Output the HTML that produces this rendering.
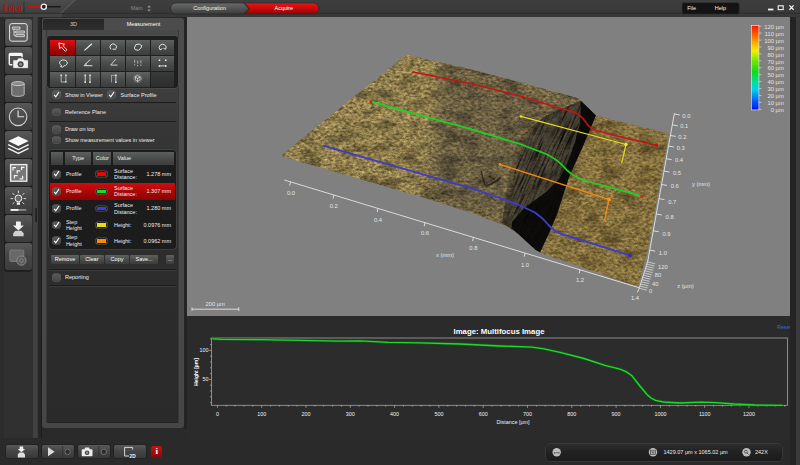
<!DOCTYPE html>
<html><head><meta charset="utf-8"><title>Leica Application Suite - Measurement</title>
<style>
*{margin:0;padding:0;box-sizing:border-box}
html,body{width:800px;height:465px;overflow:hidden;background:#2a2a2a}
body{position:relative;font-family:"Liberation Sans",sans-serif;font-size:5.5px;color:#ececec;line-height:1}
.a{position:absolute}
.t{position:absolute;white-space:nowrap;line-height:6.3px}
#topbar{left:0;top:0;width:800px;height:17px;background:linear-gradient(#3e3e3e,#3a3a3a 60%,#343434)}
#sidebar{left:0;top:17px;width:41px;height:421px;background:linear-gradient(90deg,#2c2c2c 0,#2c2c2c 3.6px,#383838 4px,#303030 4.6px,#303030 32.6px,#3c3c3c 33.2px,#424242 34px,#404040 37.4px,#262626 38px,#262626 41px)}
#sideline{left:41px;top:17px;width:1px;height:421px;background:#1d1d1d}
.sb{left:4.8px;width:27.2px;height:26.4px;border-radius:2.5px;background:linear-gradient(#585858,#454545 50%,#3c3c3c);}
#panelOuter{left:42px;top:17.6px;width:141.5px;height:410.4px;background:linear-gradient(#4c4c4c,#464646);border-radius:3px}
#panelInner{left:45.6px;top:30px;width:133.4px;height:393px;background:linear-gradient(#494949 0,#404040 50px,#363636 100px,#303030 170px,#2c2c2c 260px,#2a2a2a 100%);border-radius:0 0 2px 2px;border-left:0.7px solid #383838;border-right:0.7px solid #383838;border-bottom:0.7px solid #222}
#tab3d{left:43px;top:19px;width:61px;height:11px;background:linear-gradient(#262626,#2e2e2e);text-align:center;line-height:11px;color:#cfcfcf;border-radius:2px 0 0 0}
#tabM{left:104px;top:19px;width:79px;height:11px;text-align:center;line-height:11px;color:#fff}
#viewer{left:186.5px;top:16.6px;width:603.5px;height:299.2px;background:#808080}
#vgap{left:183.5px;top:17px;width:3.5px;height:412px;background:#242424}
#rstrip{left:790px;top:17px;width:6px;height:448px;background:#242424}
#rstrip2{left:796px;top:17px;width:4px;height:448px;background:#3a3a3a}
#chartPanel{left:187px;top:316px;width:603px;height:124px;background:#2b2b2b}
.grid{left:47.2px;top:36px;width:130.8px;height:52px;background:#1f1f1f;border-radius:3px;box-shadow:0 0 0 0.6px #555}
.cell{position:absolute;width:24.4px;height:15px;background:linear-gradient(#5f6161,#4a4c4c 50%,#3c3e3e)}
.cell.sel{background:linear-gradient(#e01010,#b00808 50%,#8a0404)}
.cell.empty{background:linear-gradient(#3a3a3a,#2e2e2e)}
.cb{position:absolute;width:7.2px;height:6.8px;border-radius:1.2px;background:linear-gradient(#5a5a5a,#454545);box-shadow:0 0 0 0.6px #6a6a6a}
.sep{position:absolute;left:49px;width:127px;height:1px;background:#1c1c1c;box-shadow:0 1px 0 #3a3a3a}
.tbl{left:48.8px;top:150px;width:127px;height:98.6px;background:#1c1c1c;border-radius:3px;box-shadow:0 0 0 0.6px #4a4a4a}
.th{position:absolute;top:151.6px;height:13.2px;background:linear-gradient(#5d5f5f,#4a4c4c 50%,#3b3d3d);line-height:13.2px}
.sw{position:absolute;left:96px;width:11.4px;height:5.8px;border-radius:1.6px;border:0.8px solid #222;box-shadow:0 0 0 0.6px #5a5a5a}
.btn{position:absolute;top:255.2px;height:8.8px;line-height:8.8px;text-align:center;background:linear-gradient(#606262,#4a4c4c 50%,#3a3c3c);border-radius:1.2px;color:#fff}
.bb{position:absolute;top:445px;height:13.4px;width:32px;border-radius:2px;background:linear-gradient(#585858,#444 50%,#383838);box-shadow:0 0 0 0.6px #1c1c1c}
</style></head><body>
<div id="topbar" class="a"></div>
<div id="sidebar" class="a"></div><div id="sideline" class="a"></div>
<div id="panelOuter" class="a"></div><div id="panelInner" class="a"></div>
<div id="tab3d" class="a">3D</div><div id="tabM" class="a">Measurement</div>
<div id="vgap" class="a"></div>
<div id="viewer" class="a"></div>
<div id="chartPanel" class="a"></div>
<div id="rstrip" class="a"></div><div id="rstrip2" class="a"></div>
<div class="a" style="left:4.4px;top:18.6px;width:28px;height:253.4px;background:#1f1f1f;border-radius:3px"></div>
<div class="a sb" style="top:19.2px"></div>
<div class="a sb" style="top:47.2px"></div>
<div class="a sb" style="top:75.2px"></div>
<div class="a sb" style="top:103.2px"></div>
<div class="a sb" style="top:131.2px"></div>
<div class="a sb" style="top:159.2px"></div>
<div class="a sb" style="top:187.2px"></div>
<div class="a sb" style="top:215.2px"></div>
<div class="a sb" style="top:243.2px"></div>
<div class="a grid"></div>
<div class="cell sel" style="left:50.1px;top:39.6px;width:25.3px"></div>
<div class="cell" style="left:76.3px;top:39.6px;width:24.0px"></div>
<div class="cell" style="left:101.2px;top:39.6px;width:24.1px"></div>
<div class="cell" style="left:126.2px;top:39.6px;width:23.7px"></div>
<div class="cell" style="left:150.8px;top:39.6px;width:23.6px"></div>
<div class="cell" style="left:50.1px;top:56px;width:25.3px"></div>
<div class="cell" style="left:76.3px;top:56px;width:24.0px"></div>
<div class="cell" style="left:101.2px;top:56px;width:24.1px"></div>
<div class="cell" style="left:126.2px;top:56px;width:23.7px"></div>
<div class="cell" style="left:150.8px;top:56px;width:23.6px"></div>
<div class="cell" style="left:50.1px;top:71.6px;width:25.3px"></div>
<div class="cell" style="left:76.3px;top:71.6px;width:24.0px"></div>
<div class="cell" style="left:101.2px;top:71.6px;width:24.1px"></div>
<div class="cell" style="left:126.2px;top:71.6px;width:23.7px"></div>
<div class="cell empty" style="left:150.8px;top:71.6px;width:23.6px"></div>
<div class="cb" style="left:52.6px;top:91.4px"></div><svg class="a" style="left:52.1px;top:89.9px" width="10" height="9" viewBox="0 0 10 9"><path d="M2.2 4.8 L3.8 6.8 L7 2" fill="none" stroke="#fff" stroke-width="1.1"/></svg>
<div class="t" style="left:65px;top:91.65px;">Show in Viewer</div>
<div class="cb" style="left:107.9px;top:91.4px"></div><svg class="a" style="left:107.4px;top:89.9px" width="10" height="9" viewBox="0 0 10 9"><path d="M2.2 4.8 L3.8 6.8 L7 2" fill="none" stroke="#fff" stroke-width="1.1"/></svg>
<div class="t" style="left:120.5px;top:91.65px;">Surface Profile</div>
<div class="sep" style="top:102px"></div>
<div class="cb" style="left:52.6px;top:108.7px"></div>
<div class="t" style="left:65px;top:109.05px;">Reference Plane</div>
<div class="sep" style="top:120.6px"></div>
<div class="cb" style="left:52.6px;top:125.8px"></div>
<div class="t" style="left:65px;top:126.15px;">Draw on top</div>
<div class="cb" style="left:52.6px;top:136.6px"></div>
<div class="t" style="left:65px;top:136.95px;">Show measurement values in viewer</div>
<div class="a tbl"></div>
<div class="th" style="left:50.6px;width:12.8px;text-align:center;"></div>
<div class="th" style="left:65px;width:26.4px;text-align:center;">Type</div>
<div class="th" style="left:93.3px;width:18.2px;text-align:center;">Color</div>
<div class="th" style="left:113.1px;width:60.6px;text-align:left;padding-left:4.4px;">Value</div>
<div class="cb" style="left:52.7px;top:170.79999999999998px"></div><svg class="a" style="left:52.2px;top:169.29999999999998px" width="10" height="9" viewBox="0 0 10 9"><path d="M2.2 4.8 L3.8 6.8 L7 2" fill="none" stroke="#fff" stroke-width="1.1"/></svg>
<div class="t" style="left:65.9px;top:171.05px;">Profile</div>
<div class="sw" style="top:171.30px;background:#f20000"></div>
<div class="t" style="left:114px;top:167.95px;">Surface</div>
<div class="t" style="left:114px;top:174.25px;">Distance:</div>
<div class="t" style="right:629px;top:171.05px">1.278 mm</div>
<div class="a" style="left:50.1px;top:182.8px;width:124.8px;height:17.2px;background:linear-gradient(#d00c0c,#a80606 55%,#8c0303)"></div>
<div class="cb" style="left:52.7px;top:188.0px"></div><svg class="a" style="left:52.2px;top:186.5px" width="10" height="9" viewBox="0 0 10 9"><path d="M2.2 4.8 L3.8 6.8 L7 2" fill="none" stroke="#fff" stroke-width="1.1"/></svg>
<div class="t" style="left:65.9px;top:188.25px;">Profile</div>
<div class="sw" style="top:188.50px;background:#10e020"></div>
<div class="t" style="left:114px;top:185.15px;">Surface</div>
<div class="t" style="left:114px;top:191.45px;">Distance:</div>
<div class="t" style="right:629px;top:188.25px">1.307 mm</div>
<div class="cb" style="left:52.7px;top:205.1px"></div><svg class="a" style="left:52.2px;top:203.6px" width="10" height="9" viewBox="0 0 10 9"><path d="M2.2 4.8 L3.8 6.8 L7 2" fill="none" stroke="#fff" stroke-width="1.1"/></svg>
<div class="t" style="left:65.9px;top:205.35px;">Profile</div>
<div class="sw" style="top:205.60px;background:#3a3ae8"></div>
<div class="t" style="left:114px;top:202.25px;">Surface</div>
<div class="t" style="left:114px;top:208.55px;">Distance:</div>
<div class="t" style="right:629px;top:205.35px">1.280 mm</div>
<div class="cb" style="left:52.7px;top:221.6px"></div><svg class="a" style="left:52.2px;top:220.1px" width="10" height="9" viewBox="0 0 10 9"><path d="M2.2 4.8 L3.8 6.8 L7 2" fill="none" stroke="#fff" stroke-width="1.1"/></svg>
<div class="t" style="left:65.9px;top:218.75px;">Step</div>
<div class="t" style="left:65.9px;top:225.05px;">Height</div>
<div class="sw" style="top:222.10px;background:#e6e010"></div>
<div class="t" style="left:114px;top:221.85px;">Height:</div>
<div class="t" style="right:629px;top:221.85px">0.0976 mm</div>
<div class="cb" style="left:52.7px;top:237.29999999999998px"></div><svg class="a" style="left:52.2px;top:235.79999999999998px" width="10" height="9" viewBox="0 0 10 9"><path d="M2.2 4.8 L3.8 6.8 L7 2" fill="none" stroke="#fff" stroke-width="1.1"/></svg>
<div class="t" style="left:65.9px;top:234.45px;">Step</div>
<div class="t" style="left:65.9px;top:240.75px;">Height</div>
<div class="sw" style="top:237.80px;background:#ff8a00"></div>
<div class="t" style="left:114px;top:237.55px;">Height:</div>
<div class="t" style="right:629px;top:237.55px">0.0962 mm</div>
<div class="btn" style="left:51px;width:28px">Remove</div>
<div class="btn" style="left:79.9px;width:24.1px">Clear</div>
<div class="btn" style="left:104.9px;width:24.3px">Copy</div>
<div class="btn" style="left:130.1px;width:28px">Save...</div>
<div class="btn" style="left:166px;width:8px">...</div>
<div class="sep" style="top:269px"></div>
<div class="cb" style="left:52.6px;top:273.8px"></div>
<div class="t" style="left:65px;top:274.15px;">Reporting</div>
<div class="sep" style="top:285px"></div>
<div class="bb" style="left:5.5px"></div>
<div class="bb" style="left:41.5px"></div>
<div class="bb" style="left:77.5px"></div>
<div class="bb" style="left:113.8px"></div>
<div class="a" style="left:151.2px;top:446px;width:11px;height:11.6px;border-radius:2.5px;background:linear-gradient(#c41414,#8a0606);color:#fff;font-weight:bold;font-size:9px;line-height:11.5px;text-align:center;font-family:'Liberation Serif',serif">i</div>
<div class="a" style="left:546px;top:443.7px;width:236px;height:17.3px;border-radius:4px;background:linear-gradient(#2d2d2d,#222 45%,#1b1b1b);box-shadow:0 0 0 0.7px #3e3e3e"></div>
<div class="t" style="left:663.5px;top:449.25px;">1429.07 µm x 1065.02 µm</div>
<div class="t" style="left:755px;top:449.25px;">242X</div>
<svg class="a" style="left:187px;top:17px" width="603" height="299" viewBox="187 17 603 299" font-family="Liberation Sans, sans-serif">
<defs>
<filter id="tex" x="0" y="0" width="100%" height="100%" color-interpolation-filters="sRGB">
<feTurbulence type="fractalNoise" baseFrequency="0.28 0.42" numOctaves="4" seed="7"/>
<feColorMatrix type="matrix" values="0.8 0 0 0 0.15  0.71 0 0 0 0.125  0.42 0 0 0 0.085  0 0 0 0 1"/>
</filter>
<filter id="tex2" x="0" y="0" width="100%" height="100%" color-interpolation-filters="sRGB">
<feTurbulence type="fractalNoise" baseFrequency="0.05 0.09" numOctaves="3" seed="11"/>
<feColorMatrix type="matrix" values="0 0 0 0 0  0 0 0 0 0  0 0 0 0 0  -2.4 0 0 0 1.35"/>
</filter>
<filter id="blur6" x="-20%" y="-20%" width="140%" height="140%"><feGaussianBlur stdDeviation="7"/></filter>
<filter id="blur3" x="-20%" y="-20%" width="140%" height="140%"><feGaussianBlur stdDeviation="2.5"/></filter>
<filter id="streak" x="0" y="0" width="100%" height="100%" color-interpolation-filters="sRGB">
<feTurbulence type="fractalNoise" baseFrequency="0.55 0.035" numOctaves="3" seed="3"/>
<feColorMatrix type="matrix" values="2.4 0 0 0 -0.32  2.4 0 0 0 -0.32  2.4 0 0 0 -0.32  0 0 0 0 1"/>
</filter>
<clipPath id="facec"><path d="M580.6 100.5 L596 115 L583 146 L569 177 L550 231 L540 252.5 L535.5 250 L518 234 L506 226 L511 196 L516 165 L524 138 L548 115 Z"/></clipPath>
<clipPath id="surf"><path d="M280.5 156 L406.5 54.5 L470 69 L540 87.5 L579 98.5 L596 115.5 L669 133.6 L648 249 L638 286.8 L541 253 L535.5 250 L518 234 L507.5 226.4 L472.5 213.2 L420 196.6 Z"/></clipPath>
<linearGradient id="cliff" gradientUnits="userSpaceOnUse" x1="510" y1="150" x2="572" y2="172">
<stop offset="0" stop-color="#ffffff"/>
<stop offset="0.28" stop-color="#8c8986"/>
<stop offset="0.7" stop-color="#72706e"/>
<stop offset="1" stop-color="#4c4a48"/>
</linearGradient>
<linearGradient id="rain" x1="0" y1="0" x2="0" y2="1">
<stop offset="0" stop-color="#ff1800"/><stop offset="0.1" stop-color="#ff5a00"/><stop offset="0.2" stop-color="#ffa800"/><stop offset="0.3" stop-color="#f4f000"/><stop offset="0.42" stop-color="#70e800"/><stop offset="0.55" stop-color="#10d820"/><stop offset="0.66" stop-color="#00e090"/><stop offset="0.76" stop-color="#00d0f0"/><stop offset="0.86" stop-color="#0078f8"/><stop offset="1" stop-color="#0010f0"/>
</linearGradient>
</defs>
<g clip-path="url(#surf)">
<rect x="270" y="45" width="410" height="250" filter="url(#tex)"/>
<rect x="270" y="45" width="410" height="250" fill="#3a2e1c" filter="url(#tex2)" opacity="0.5"/>
<path d="M596 115.5 L669 133.6 L648 249 L638 286.8 L541 253 L569 177 Z" fill="#c09838" opacity="0.18"/>
<path d="M280 156 L406 54 L450 64 L420 200 Z" fill="#e0c878" opacity="0.13" filter="url(#blur6)"/>
<path d="M440 60 L585 98.5 L530 138 L516 196 L512 228 L425 200 Z" fill="#46423a" opacity="0.4" filter="url(#blur6)"/>
<path d="M596 115.5 L669 133.6 L648 249 L638 286.8 L541 253 L569 177 Z" fill="#4a3c20" opacity="0.16"/>
<path d="M580.6 100.5 L596 115 L583 146 L569 177 L550 231 L540 252.5 L535.5 250 L518 234 L502 223 L506 196 L511 165 L518 138 L545 116 Z" fill="url(#cliff)" style="mix-blend-mode:multiply"/>
<path d="M580.6 100.5 L596 115 L583 146 L569 177 L550 231 L540 252.5 L535.5 250 L518 234 L508 226 L512 196 L517 165 L526 138 L550 114 Z" fill="#5a564e" opacity="0.45" filter="url(#blur3)"/>
<g clip-path="url(#facec)" style="mix-blend-mode:multiply"><g transform="rotate(24 545 170)"><rect x="440" y="60" width="220" height="240" filter="url(#streak)"/></g></g>
<path d="M581 101 L596 115 L583 146 L569 177 L563 196 L557 215 L548 235 L540 252.5 L535.5 250 L518 234 L512 228 L512 222 L524 208 L546 192 L560 178 L568 162 L575 143 L577 133 L580 124 Z" fill="#080706" opacity="0.9"/>
<path d="M481.4 171 q1 8 3.8 14.4 M485.4 186.4 q9 -3 15.2 -9 M489 176 q3 3 6 3" stroke="#1d170f" stroke-width="1.5" fill="none" opacity="0.75"/>
</g>
<g stroke="#e4e4e4" stroke-width="0.9" fill="none">
<path d="M284.4 180 L639.4 287.8 L637.4 292.4"/>
<path d="M290.5 181.9 l-0.8 3.6"/>
<path d="M333.8 195.0 l-0.8 3.6"/>
<path d="M378 208.4 l-0.8 3.6"/>
<path d="M425 222.7 l-0.8 3.6"/>
<path d="M473.4 237.4 l-0.8 3.6"/>
<path d="M525 253.1 l-0.8 3.6"/>
<path d="M580 269.8 l-0.8 3.6"/>
<path d="M674.4 113.3 L647.8 261 L639.4 287.8"/>
<path d="M674.3 114 l5.4 0.9"/>
<path d="M672.3 124.9 l5.4 0.9"/>
<path d="M670.4 135.5 l5.4 0.9"/>
<path d="M668.5 146.1 l5.4 0.9"/>
<path d="M666.2 158.7 l5.4 0.9"/>
<path d="M664.0 171.1 l5.4 0.9"/>
<path d="M661.6 184.5 l5.4 0.9"/>
<path d="M659.0 198.7 l5.4 0.9"/>
<path d="M656.3 214 l5.4 0.9"/>
<path d="M653.2 230.8 l5.4 0.9"/>
<path d="M649.8 250.2 l5.4 0.9"/>
<path d="M647.6 262.0 l7.6 1.8" stroke-width="0.7"/>
<path d="M646.9 264.2 l7.6 1.8" stroke-width="0.7"/>
<path d="M646.2 266.4 l7.6 1.8" stroke-width="0.7"/>
<path d="M645.6 268.6 l7.6 1.8" stroke-width="0.7"/>
<path d="M644.9 270.8 l7.6 1.8" stroke-width="0.7"/>
<path d="M644.2 273.0 l7.6 1.8" stroke-width="0.7"/>
<path d="M643.5 275.2 l7.6 1.8" stroke-width="0.7"/>
<path d="M642.8 277.4 l7.6 1.8" stroke-width="0.7"/>
<path d="M642.1 279.6 l7.6 1.8" stroke-width="0.7"/>
<path d="M641.5 281.8 l7.6 1.8" stroke-width="0.7"/>
<path d="M640.8 284.0 l7.6 1.8" stroke-width="0.7"/>
<path d="M640.1 286.2 l7.6 1.8" stroke-width="0.7"/>
<path d="M639.4 288.4 l7.6 1.8" stroke-width="0.7"/>
</g>
<g fill="#e4e4e4" font-size="5.8" text-anchor="middle">
<text x="291" y="194.5">0.0</text>
<text x="333.8" y="207.6">0.2</text>
<text x="378" y="221.5">0.4</text>
<text x="425" y="235">0.6</text>
<text x="473.4" y="249.6">0.8</text>
<text x="525" y="266.5">1.0</text>
<text x="580" y="282">1.2</text>
<text x="635" y="299.7">1.4</text>
<text x="445" y="256.7">x (mm)</text>
<text x="686.4" y="117.8">0.0</text>
<text x="684.2" y="128.4">0.1</text>
<text x="682.4" y="139">0.2</text>
<text x="680.8" y="149.9">0.3</text>
<text x="679" y="162.3">0.4</text>
<text x="677" y="174.7">0.5</text>
<text x="674.7" y="188.3">0.6</text>
<text x="672.2" y="203.6">0.7</text>
<text x="669.6" y="219.3">0.8</text>
<text x="666.5" y="236.4">0.9</text>
<text x="662.9" y="255.4">1.0</text>
<text x="701" y="186">y (mm)</text>
<text x="662.8" y="268.6">120</text><text x="658" y="276.9">80</text><text x="655.3" y="285.5">40</text><text x="650.7" y="292.7">0</text>
<text x="685.4" y="288.3">z (µm)</text>
<text x="215.2" y="306">200 µm</text>
</g>
<path d="M192 309.2 H238.8 M192 307.4 v3.6 M238.8 307.4 v3.6" stroke="#e4e4e4" stroke-width="0.9" fill="none"/>
<g fill="none" stroke-linecap="round" stroke-linejoin="round">
<path d="M413 72 L470 83.6 L522.5 96.7 L556.6 107.2 L572 111.5 Q580 114 585.5 121.7 Q589 128 596 130.5 L617 136 L656.4 145.3" stroke="#c41414" stroke-width="1.5"/>
<path d="M371 101.7 L470 128.8 L520 144 L545 153.5 Q556 158.5 563 166 Q570 174.5 580 178.5 L588 181.5 L642 196.2" stroke="#1ed026" stroke-width="1.8"/>
<path d="M323.8 145.8 L470 187.8 L517 204 L535 212.5 Q543 218 549 225.5 Q555 232 563 234.5 L630 255.3" stroke="#3c3cc4" stroke-width="1.9"/>
<path d="M521 116.4 L626 144.5 L621.7 163" stroke="#e4dc24" stroke-width="1.2"/>
<path d="M500 164.5 L609 199.4 L604.7 220" stroke="#f08818" stroke-width="1.4"/>
</g>
<circle cx="656.4" cy="145.3" r="1.7" fill="#c01010"/><circle cx="370.8" cy="101.4" r="1.5" fill="#e02010"/><circle cx="642" cy="196.2" r="1.8" fill="#d02818"/><circle cx="630" cy="255.3" r="2" fill="#3030b8"/>
<circle cx="626" cy="144.5" r="1.7" fill="#f0e830"/><circle cx="521" cy="116.4" r="1.2" fill="#e8e020"/><circle cx="609" cy="199.4" r="1.9" fill="#f89020"/><circle cx="500" cy="164.5" r="1.4" fill="#f08818"/>
<rect x="751.3" y="25.6" width="7.6" height="84.3" fill="url(#rain)" stroke="#f0f0f0" stroke-width="0.6"/>
<g fill="#e4e4e4" font-size="5.8">
<text x="783.8" y="29.1" text-anchor="end">120 µm</text>
<text x="783.8" y="36.0" text-anchor="end">110 µm</text>
<text x="783.8" y="42.9" text-anchor="end">100 µm</text>
<text x="783.8" y="49.8" text-anchor="end">90 µm</text>
<text x="783.8" y="56.7" text-anchor="end">80 µm</text>
<text x="783.8" y="63.5" text-anchor="end">70 µm</text>
<text x="783.8" y="70.4" text-anchor="end">60 µm</text>
<text x="783.8" y="77.3" text-anchor="end">50 µm</text>
<text x="783.8" y="84.2" text-anchor="end">40 µm</text>
<text x="783.8" y="91.1" text-anchor="end">30 µm</text>
<text x="783.8" y="98.0" text-anchor="end">20 µm</text>
<text x="783.8" y="104.9" text-anchor="end">10 µm</text>
<text x="783.8" y="111.8" text-anchor="end">0 µm</text>
</g>
<g stroke="#e4e4e4" stroke-width="0.6">
<path d="M758.9 26.2 h2.6"/>
<path d="M758.9 33.1 h2.6"/>
<path d="M758.9 40.1 h2.6"/>
<path d="M758.9 47.0 h2.6"/>
<path d="M758.9 53.9 h2.6"/>
<path d="M758.9 60.8 h2.6"/>
<path d="M758.9 67.8 h2.6"/>
<path d="M758.9 74.7 h2.6"/>
<path d="M758.9 81.6 h2.6"/>
<path d="M758.9 88.6 h2.6"/>
<path d="M758.9 95.5 h2.6"/>
<path d="M758.9 102.4 h2.6"/>
<path d="M758.9 109.4 h2.6"/>
</g>
</svg>
<svg class="a" style="left:187px;top:316px" width="603" height="124" viewBox="187 316 603 124" font-family="Liberation Sans, sans-serif">
<text x="499" y="334.2" text-anchor="middle" font-size="8.1" font-weight="bold" fill="#fff" textLength="91" lengthAdjust="spacingAndGlyphs">Image: Multifocus Image</text>
<text x="784" y="328.5" text-anchor="middle" font-size="5.2" fill="#2f6fd0">Reset</text>
<rect x="211.4" y="338" width="576" height="67.3" fill="#2c2c2c" stroke="#a4a4a4" stroke-width="0.8"/>
<path d="M217.4 405.3 v2.6 M226.3 405.3 v1.4 M235.1 405.3 v1.4 M244.0 405.3 v1.4 M252.8 405.3 v1.4 M261.7 405.3 v2.6 M270.6 405.3 v1.4 M279.4 405.3 v1.4 M288.3 405.3 v1.4 M297.1 405.3 v1.4 M306.0 405.3 v2.6 M314.9 405.3 v1.4 M323.7 405.3 v1.4 M332.6 405.3 v1.4 M341.4 405.3 v1.4 M350.3 405.3 v2.6 M359.2 405.3 v1.4 M368.0 405.3 v1.4 M376.9 405.3 v1.4 M385.7 405.3 v1.4 M394.6 405.3 v2.6 M403.5 405.3 v1.4 M412.3 405.3 v1.4 M421.2 405.3 v1.4 M430.0 405.3 v1.4 M438.9 405.3 v2.6 M447.8 405.3 v1.4 M456.6 405.3 v1.4 M465.5 405.3 v1.4 M474.3 405.3 v1.4 M483.2 405.3 v2.6 M492.1 405.3 v1.4 M500.9 405.3 v1.4 M509.8 405.3 v1.4 M518.6 405.3 v1.4 M527.5 405.3 v2.6 M536.4 405.3 v1.4 M545.2 405.3 v1.4 M554.1 405.3 v1.4 M562.9 405.3 v1.4 M571.8 405.3 v2.6 M580.7 405.3 v1.4 M589.5 405.3 v1.4 M598.4 405.3 v1.4 M607.2 405.3 v1.4 M616.1 405.3 v2.6 M625.0 405.3 v1.4 M633.8 405.3 v1.4 M642.7 405.3 v1.4 M651.5 405.3 v1.4 M660.4 405.3 v2.6 M669.3 405.3 v1.4 M678.1 405.3 v1.4 M687.0 405.3 v1.4 M695.8 405.3 v1.4 M704.7 405.3 v2.6 M713.6 405.3 v1.4 M722.4 405.3 v1.4 M731.3 405.3 v1.4 M740.1 405.3 v1.4 M749.0 405.3 v2.6 M757.9 405.3 v1.4 M766.7 405.3 v1.4 M775.6 405.3 v1.4 M784.4 405.3 v1.4 M211.4 402.6 h-1.4 M211.4 396.8 h-1.4 M211.4 391.0 h-1.4 M211.4 385.2 h-1.4 M211.4 379.4 h-2.6 M211.4 373.6 h-1.4 M211.4 367.8 h-1.4 M211.4 362.0 h-1.4 M211.4 356.2 h-1.4 M211.4 350.4 h-2.6 M211.4 344.6 h-1.4 M211.4 338.8 h-1.4" stroke="#c8c8c8" stroke-width="0.6" fill="none"/>
<g fill="#f0f0f0" font-size="5.4" text-anchor="middle">
<text x="217.4" y="416.4">0</text>
<text x="261.7" y="416.4">100</text>
<text x="306.0" y="416.4">200</text>
<text x="350.3" y="416.4">300</text>
<text x="394.6" y="416.4">400</text>
<text x="438.9" y="416.4">500</text>
<text x="483.2" y="416.4">600</text>
<text x="527.5" y="416.4">700</text>
<text x="571.8" y="416.4">800</text>
<text x="616.1" y="416.4">900</text>
<text x="660.4" y="416.4">1000</text>
<text x="704.7" y="416.4">1100</text>
<text x="749.0" y="416.4">1200</text>
<text x="513" y="423.6">Distance [µm]</text>
<text x="208.6" y="352.3" text-anchor="end">100</text><text x="208.6" y="381.4" text-anchor="end">50</text>
<text transform="translate(197.6 372) rotate(-90)" font-weight="bold" font-size="5" fill="#fff">Height [µm]</text>
</g>
<path d="M213.0 338.9 L222.0 339.3 L260.0 339.7 L300.0 340.4 L340.0 341.2 L360.0 340.9 L388.0 342.4 L420.0 342.8 L460.0 344.0 L500.0 346.0 L532.0 347.2 L544.0 348.8 L560.0 352.3 L584.0 358.5 L605.0 365.4 L620.0 369.2 L626.0 371.6 L632.0 375.8 L639.5 385.5 L647.0 394.5 L651.0 398.0 L655.5 400.3 L663.5 402.0 L680.0 403.0 L701.0 402.1 L716.0 402.6 L734.0 404.0 L755.0 405.0 L782.0 405.3" fill="none" stroke="#0a6a14" stroke-width="2.8" stroke-linejoin="round" stroke-linecap="round" opacity="0.6"/>
<path d="M213.0 338.9 L222.0 339.3 L260.0 339.7 L300.0 340.4 L340.0 341.2 L360.0 340.9 L388.0 342.4 L420.0 342.8 L460.0 344.0 L500.0 346.0 L532.0 347.2 L544.0 348.8 L560.0 352.3 L584.0 358.5 L605.0 365.4 L620.0 369.2 L626.0 371.6 L632.0 375.8 L639.5 385.5 L647.0 394.5 L651.0 398.0 L655.5 400.3 L663.5 402.0 L680.0 403.0 L701.0 402.1 L716.0 402.6 L734.0 404.0 L755.0 405.0 L782.0 405.3" fill="none" stroke="#22d82c" stroke-width="1.35" stroke-linejoin="round" stroke-linecap="round"/>
</svg>
<svg class="a" style="left:0;top:0" width="800" height="18" viewBox="0 0 800 18" font-family="Liberation Sans, sans-serif">
<defs>
<linearGradient id="tl" x1="0" y1="0" x2="0" y2="1"><stop offset="0" stop-color="#4c4c4c"/><stop offset="1" stop-color="#3e3e3e"/></linearGradient>
<linearGradient id="pill" x1="0" y1="0" x2="0" y2="1"><stop offset="0" stop-color="#6a6c6c"/><stop offset="0.5" stop-color="#525454"/><stop offset="1" stop-color="#3c3e3e"/></linearGradient>
<linearGradient id="pillr" x1="0" y1="0" x2="0" y2="1"><stop offset="0" stop-color="#ee1414"/><stop offset="0.5" stop-color="#c40a0a"/><stop offset="1" stop-color="#960404"/></linearGradient>
</defs>
<path d="M0 0 H76 L62 13 H0 Z" fill="url(#tl)"/>
<path d="M76 0 L62 13 L60 13 L74 0 Z" fill="#5a5a5a" opacity="0.8"/>
<path d="M0 13.4 H800" stroke="#2a2a2a" stroke-width="0.8"/>
<rect x="0" y="13.8" width="800" height="3.2" fill="#383838"/><rect x="0" y="13.8" width="62" height="3.2" fill="#444"/>
<path d="M24 1 V12" stroke="#2c2c2c" stroke-width="0.8"/>
<text x="3" y="10.6" font-family="Liberation Serif, serif" font-style="italic" font-weight="bold" font-size="9.4" fill="#b41212" textLength="19" lengthAdjust="spacingAndGlyphs">Leica</text>
<path d="M46 6.8 H60" stroke="#1a1a1a" stroke-width="1.6" stroke-linecap="round"/>
<path d="M27.7 6.8 H41" stroke="#c81010" stroke-width="1.8" stroke-linecap="round"/>
<circle cx="43.8" cy="6.8" r="2.6" fill="#222" stroke="#f2f2f2" stroke-width="1.3"/>
<text x="136.6" y="10.4" text-anchor="middle" font-size="5.5" fill="#8a8a8a">Main</text>
<path d="M147.4 7.4 l1.7 -2.2 l1.7 2.2 Z M147.4 9.4 l1.7 2.2 l1.7 -2.2 Z" fill="#9a9a9a"/>
<path d="M176 3 H243.5 L248.5 8.5 L243.5 14 H176 A5.5 5.5 0 0 1 176 3 Z" fill="url(#pill)" stroke="#222" stroke-width="0.6"/>
<path d="M244.6 3 H313.3 A5.5 5.5 0 0 1 313.3 14 H244.6 L249.6 8.5 Z" fill="url(#pillr)" stroke="#222" stroke-width="0.5"/>
<text x="209.6" y="10.4" text-anchor="middle" font-size="5.5" fill="#f4f4f4">Configuration</text>
<text x="283.8" y="10.4" text-anchor="middle" font-size="5.5" fill="#fff">Acquire</text>
<rect x="682" y="2.6" width="57.4" height="11.6" rx="1.5" fill="#141414" stroke="#3c3c3c" stroke-width="0.5"/>
<text x="691.6" y="10.4" text-anchor="middle" font-size="5.5" fill="#f4f4f4">File</text>
<text x="720.5" y="10.4" text-anchor="middle" font-size="5.5" fill="#f4f4f4">Help</text>
<path d="M768 8.6 h5.4 v1.8 h-5.4 Z" fill="#f2f2f2"/>
<rect x="778.2" y="5.8" width="5" height="3.8" fill="none" stroke="#f2f2f2" stroke-width="1.1"/>
<path d="M789.4 5.4 l4.2 4.4 M793.6 5.4 l-4.2 4.4" stroke="#f2f2f2" stroke-width="1.3"/>
</svg>
<svg class="a" style="left:0;top:17px" width="42" height="260" viewBox="0 17 42 260" fill="none" font-family="Liberation Sans, sans-serif">
<rect x="35.4" y="208" width="1.4" height="14" fill="#1c1c1c"/>
<rect x="5.4" y="19.2" width="26.4" height="26.4" rx="2.5" fill="#5c5c5c" opacity="0.55"/>
<rect x="9.6" y="23.6" width="17.6" height="17.6" rx="2.2" stroke="#e6e6e6" stroke-width="1" fill="#6a6a6a" fill-opacity="0.5"/>
<path d="M12.6 27 h7.4 v2.2 h-7.4 Z M15.8 31 h8.6 v2 h-8.6 Z M15.8 34.6 h8.6 v2 h-8.6 Z" stroke="#e6e6e6" stroke-width="0.8" fill="#777"/>
<path d="M14 29.2 V35.6 H15.8 M14 32 H15.8" stroke="#e6e6e6" stroke-width="0.8"/>
<rect x="8.6" y="52.8" width="14.2" height="12.6" rx="1.6" fill="#f4f4f4"/>
<rect x="10" y="56" width="11.4" height="8" fill="#505050"/>
<path d="M13.8 59.8 h3.2 l1.4 -2 h4.6 l1.4 2 h3 a1 1 0 0 1 1 1 v6.6 a1 1 0 0 1 -1 1 h-13.6 a1 1 0 0 1 -1 -1 v-6.6 a1 1 0 0 1 1 -1 Z" fill="#efefef" stroke="#3c3c3c" stroke-width="0.8"/>
<circle cx="20.6" cy="64.2" r="3" fill="#444"/><circle cx="20.6" cy="64.2" r="1.5" fill="#8e8e8e"/>
<path d="M11.8 83.6 v10.8 a6.2 2 0 0 0 12.4 0 v-10.8" fill="#6e6e6e" stroke="#c4c4c4" stroke-width="0.9"/>
<ellipse cx="18" cy="83.6" rx="6.2" ry="2" fill="#888" stroke="#d0d0d0" stroke-width="0.9"/>
<circle cx="18.1" cy="116.8" r="8.8" stroke="#d4d4d4" stroke-width="1.1" fill="#555" fill-opacity="0.5"/>
<path d="M18.1 110.6 V116.8 H24" stroke="#e4e4e4" stroke-width="1.1"/>
<path d="M18.4 136.2 L28.6 141 L18.4 146 L8.2 141 Z" fill="#fafafa"/>
<path d="M8.2 144.6 L18.4 149.6 L28.6 144.6 M8.2 148.4 L18.4 153.4 L28.6 148.4" stroke="#f0f0f0" stroke-width="1.5" stroke-linejoin="round"/>
<rect x="10.6" y="164.6" width="16.2" height="16.6" fill="#777" stroke="#ececec" stroke-width="1.4"/>
<path d="M13 170.4 v-2.8 h3 M17.2 173.6 v-2.8 h3 M21.6 170 v-2.6 h2.8 M14.4 178.6 v-3 h3.2 M19.6 178.8 h3 v-3" stroke="#f4f4f4" stroke-width="1.2"/>
<circle cx="18.4" cy="198.4" r="3.4" stroke="#f0f0f0" stroke-width="1" fill="#666"/>
<path d="M16.8 202.4 h3.2 v2.4 h-3.2 Z" fill="#f0f0f0"/>
<path d="M18.4 190.6 v2.6 M12.4 193 l2 2 M24.4 193 l-2 2 M10.6 198.6 h2.6 M23.6 198.6 h2.6 M12.6 204 l1.8 -1.6 M24.2 204 l-1.8 -1.6" stroke="#e8e8e8" stroke-width="0.9"/>
<rect x="10.6" y="209" width="15.6" height="1.8" fill="#8a8a8a"/><rect x="10.6" y="209" width="7.8" height="1.8" fill="#f4f4f4"/>
<path d="M16 221.6 h4.8 v4 h3 l-5.4 5 l-5.4 -5 h3 Z" fill="#f0f0f0"/>
<path d="M15.4 230.8 h6 l2.2 2.4 v3 h-10.4 v-3 Z" fill="#d0d0d0"/>
<rect x="9.8" y="250" width="14" height="11.4" rx="1" fill="#686868" stroke="#8a8a8a" stroke-width="0.7"/>
<circle cx="21.4" cy="260.6" r="4.6" fill="#5c5c5c" stroke="#8c8c8c" stroke-width="1"/><circle cx="21.4" cy="260.6" r="1.8" stroke="#8c8c8c" stroke-width="0.8"/>
</svg>
<svg class="a" style="left:47px;top:36px" width="131" height="52" viewBox="47 36 131 52" fill="none" stroke="#f0f0f0" stroke-width="0.9" stroke-linejoin="round" stroke-linecap="round">
<path transform="translate(63.0 47.2) rotate(-42)" d="M0 -5.6 L3.1 -1.2 H1.1 V4.6 H-1.1 V-1.2 H-3.1 Z" stroke-width="0.85"/>
<path d="M84.80000000000001 50.2 L91.60000000000001 44.0" stroke-width="1.15"/>
<path d="M110.7 49.0 a3.3 3.1 0 1 1 5.6 -0.8 M112.89999999999999 49.2 h2.8" stroke-width="0.9"/>
<path d="M134.5 47.6 L135.9 44.6 L139.29999999999998 44.0 L141.9 45.800000000000004 L140.7 48.400000000000006 L138.5 50.2 L135.7 49.800000000000004 Z" stroke-width="0.9"/>
<path d="M160.2 49.800000000000004 a3.5 3.2 0 1 1 5.4 -0.6 L163.79999999999998 48.400000000000006 M160.2 49.800000000000004 L162.0 48.800000000000004" stroke-width="0.9"/>
<path d="M61.4 65.5 a3.9 3 0 1 1 2.6 0.4 l-1.4 1.2 l-1.8 -0.4 Z" stroke-width="0.9"/>
<path d="M90.0 59.699999999999996 L84.0 65.7 H92.0" stroke-width="0.9"/><path d="M86.80000000000001 65.5 a3 3 0 0 0 -0.9 -2" stroke-width="0.6"/>
<path d="M115.5 59.5 L110.7 65.1 H117.1" stroke-width="0.8"/>
<path d="M134.7 59.9 v3 M137.7 60.699999999999996 v3 M140.9 60.3 v3" stroke-width="0.8" stroke="#c4c4c4" stroke-linecap="butt"/><path d="M134.7 64.7 v0.1 M137.7 65.5 v0.1 M140.9 65.1 v0.1" stroke-width="1.1" stroke="#d8d8d8"/>
<path d="M159.4 65.89999999999999 H165.79999999999998" stroke-width="0.8"/><path d="M158.7 59.599999999999994 h1.5 v1.5 h-1.5 Z M165.0 59.599999999999994 h1.5 v1.5 h-1.5 Z M158.7 65.2 h1.5 v1.5 h-1.5 Z M165.0 65.2 h1.5 v1.5 h-1.5 Z" fill="#f4f4f4" stroke="none"/>
<path d="M61.199999999999996 75.8 V82.0 H65.89999999999999 V76.39999999999999" stroke-width="0.7" stroke="#dcdcdc"/><path d="M60.5 74.6 h1.4 v1.4 h-1.4 Z M65.2 74.6 h1.4 v1.4 h-1.4 Z M65.2 81.2 h1.4 v1.4 h-1.4 Z" fill="#f4f4f4" stroke="none"/>
<path d="M85.2 76.0 V81.6 M90.0 76.0 V81.6" stroke-width="0.8"/><path d="M84.5 74.6 h1.4 v1.4 h-1.4 Z M89.30000000000001 74.6 h1.4 v1.4 h-1.4 Z M84.5 81.6 h1.4 v1.4 h-1.4 Z M89.30000000000001 81.6 h1.4 v1.4 h-1.4 Z" fill="#f4f4f4" stroke="none"/>
<path d="M111.5 75.6 V82.0 M111.5 75.39999999999999 H115.7" stroke-width="0.6" stroke="#c8c8c8"/><path d="M115.89999999999999 76.2 V81.39999999999999" stroke-width="0.8"/><path d="M115.2 74.6 h1.4 v1.4 h-1.4 Z M115.2 81.6 h1.4 v1.4 h-1.4 Z" fill="#f4f4f4" stroke="none"/>
<circle cx="137.7" cy="78.6" r="4" stroke="#8e8e8e" stroke-width="0.6"/><path d="M137.7 75.8 l2.4 1.3 v2.8 l-2.4 1.4 l-2.4 -1.4 v-2.8 Z M135.29999999999998 77.1 l2.4 1.3 l2.4 -1.3 M137.7 78.39999999999999 v3" stroke-width="0.7"/>
</svg>
<svg class="a" style="left:0;top:442px" width="170" height="20" viewBox="0 442 170 20" fill="none">
<path d="M19.6 446.4 h3.6 v2.6 h1.9 l-3.7 3.2 l-3.7 -3.2 h1.9 Z" fill="#f0f0f0"/><path d="M19.3 452.6 h4.2 l1.5 1.8 v3 h-7.2 v-3 Z" fill="#dedede"/>
<path d="M48 447.2 L54.6 451.7 L48 456.2 Z" fill="#dcdcdc"/><path d="M62.6 446 v11.4" stroke="#2c2c2c" stroke-width="0.7"/><circle cx="67.6" cy="451.8" r="2.7" stroke="#767676" stroke-width="0.9" fill="#2c2c2c"/>
<path d="M82.4 449.2 h1.9 l1 -1.6 h3.6 l1 1.6 h1.9 a0.7 0.7 0 0 1 0.7 0.7 v5.6 a0.7 0.7 0 0 1 -0.7 0.7 h-9.4 a0.7 0.7 0 0 1 -0.7 -0.7 v-5.6 a0.7 0.7 0 0 1 0.7 -0.7 Z" fill="#ececec"/><circle cx="87.1" cy="452.7" r="2.3" fill="#484848"/><circle cx="87.1" cy="452.7" r="1.1" fill="#9a9a9a"/>
<path d="M98.8 446 v11.4" stroke="#2c2c2c" stroke-width="0.7"/><circle cx="103.8" cy="451.8" r="2.7" stroke="#767676" stroke-width="0.9" fill="#2c2c2c"/>
<path d="M132.6 449.6 v-2.2 h-8 v8.6 h4.4" stroke="#e4e4e4" stroke-width="0.9"/><text x="129.6" y="457.6" font-size="4.8" font-weight="bold" fill="#f0f0f0" font-family="Liberation Sans, sans-serif">2D</text>
</svg>
<svg class="a" style="left:546px;top:443px" width="236" height="19" viewBox="546 443 236 19" fill="none">
<circle cx="556.7" cy="452.3" r="4.2" fill="#bdbdbd"/><path d="M554.4 452.8 h4.6 M554.4 452 v1.6 M559 452 v1.6" stroke="#444" stroke-width="0.7"/>
<circle cx="653" cy="452.3" r="4.2" fill="#bdbdbd"/><rect x="650.6" y="450.2" width="4.8" height="4.2" stroke="#444" stroke-width="0.7"/><path d="M651.6 451.4 h2.8 v2 h-2.8 Z" fill="#666"/>
<circle cx="746.5" cy="452.3" r="4.2" fill="#bdbdbd"/><circle cx="745.9" cy="451.7" r="1.5" stroke="#444" stroke-width="0.8"/><path d="M747 452.9 l1.6 1.6" stroke="#444" stroke-width="0.9"/>
</svg>
</body></html>
